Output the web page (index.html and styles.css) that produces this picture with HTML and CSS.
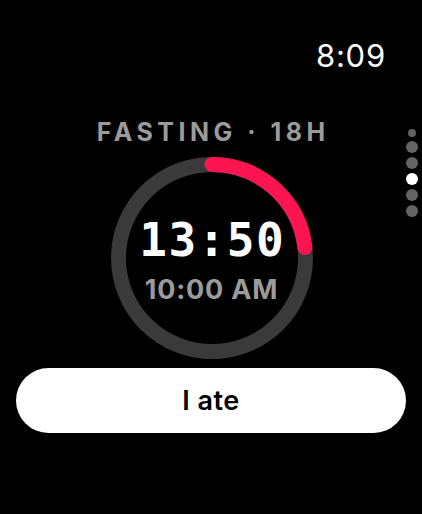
FILE: index.html
```html
<!DOCTYPE html>
<html>
<head>
<meta charset="utf-8">
<link rel="stylesheet" href="styles.css">
</head>
<body>
<div class="screen">
  <div class="status"><span class="clock">8:09</span></div>
  <div class="label">FASTING · 18H</div>
  <div class="ring">
    <svg class="ring-svg" viewBox="0 0 202 202" width="202" height="202">
      <circle class="track" cx="101" cy="101" r="93.5"/>
      <circle class="progress" cx="101" cy="101" r="93.5" transform="rotate(-90 101 101)" stroke-dasharray="136 600"/>
    </svg>
    <div class="ring-text">
      <div class="elapsed">13:50</div>
      <div class="start">10:00 AM</div>
    </div>
  </div>
  <button class="action">I ate</button>
  <div class="pager">
    <span class="dot small"></span>
    <span class="dot"></span>
    <span class="dot"></span>
    <span class="dot active"></span>
    <span class="dot"></span>
    <span class="dot"></span>
  </div>
</div>
</body>
</html>
```
FILE: styles.css
```css
html, body {
  margin: 0;
  padding: 0;
  background: #000;
}
.screen {
  width: 422px;
  height: 514px;
  background: #000;
  position: relative;
  display: flex;
  flex-direction: column;
  align-items: center;
  font-family: Inter, "Liberation Sans", sans-serif;
  overflow: hidden;
}
.status {
  align-self: stretch;
  display: flex;
  justify-content: flex-end;
  padding: 40px 36px 0 0;
}
.clock {
  color: #fff;
  font-size: 31px;
  line-height: 31px;
  font-weight: 400;
  letter-spacing: 0.8px;
}
.label {
  margin-top: 49px;
  color: #9b9b9b;
  font-size: 25px;
  line-height: 25px;
  font-weight: 700;
  letter-spacing: 4.5px;
  padding-left: 4.5px;
}
.ring {
  margin-top: 12px;
  width: 202px;
  height: 202px;
  display: grid;
  margin-left: 1px;
}
.ring-svg, .ring-text {
  grid-area: 1 / 1;
}
.track {
  fill: none;
  stroke: #3a3a3a;
  stroke-width: 15;
}
.progress {
  fill: none;
  stroke: #fd1552;
  stroke-width: 15;
  stroke-linecap: round;
}
.ring-text {
  display: flex;
  flex-direction: column;
  align-items: center;
  padding-top: 60px;
}
.elapsed {
  color: #fff;
  font-family: "DejaVu Sans Mono", "Liberation Mono", monospace;
  font-weight: 700;
  font-size: 46px;
  line-height: 46px;
  letter-spacing: 1.5px;
  padding-left: 1.5px;
}
.start {
  margin-top: 13px;
  color: #9b9b9b;
  font-size: 27px;
  line-height: 27px;
  font-weight: 700;
  letter-spacing: 0.8px;
}
.action {
  margin-top: 9px;
  width: 390px;
  height: 65px;
  border: none;
  border-radius: 33px;
  background: #fff;
  color: #000;
  font-family: Inter, "Liberation Sans", sans-serif;
  font-size: 27px;
  font-weight: 600;
  letter-spacing: 0.5px;
  padding: 0;
}
.pager {
  position: absolute;
  right: 4px;
  top: 129px;
  width: 12px;
  display: flex;
  flex-direction: column;
  align-items: center;
  gap: 4px;
}
.dot {
  width: 12px;
  height: 12px;
  border-radius: 50%;
  background: #636363;
}
.dot.small {
  width: 8px;
  height: 8px;
}
.dot.active {
  background: #fff;
}
```
